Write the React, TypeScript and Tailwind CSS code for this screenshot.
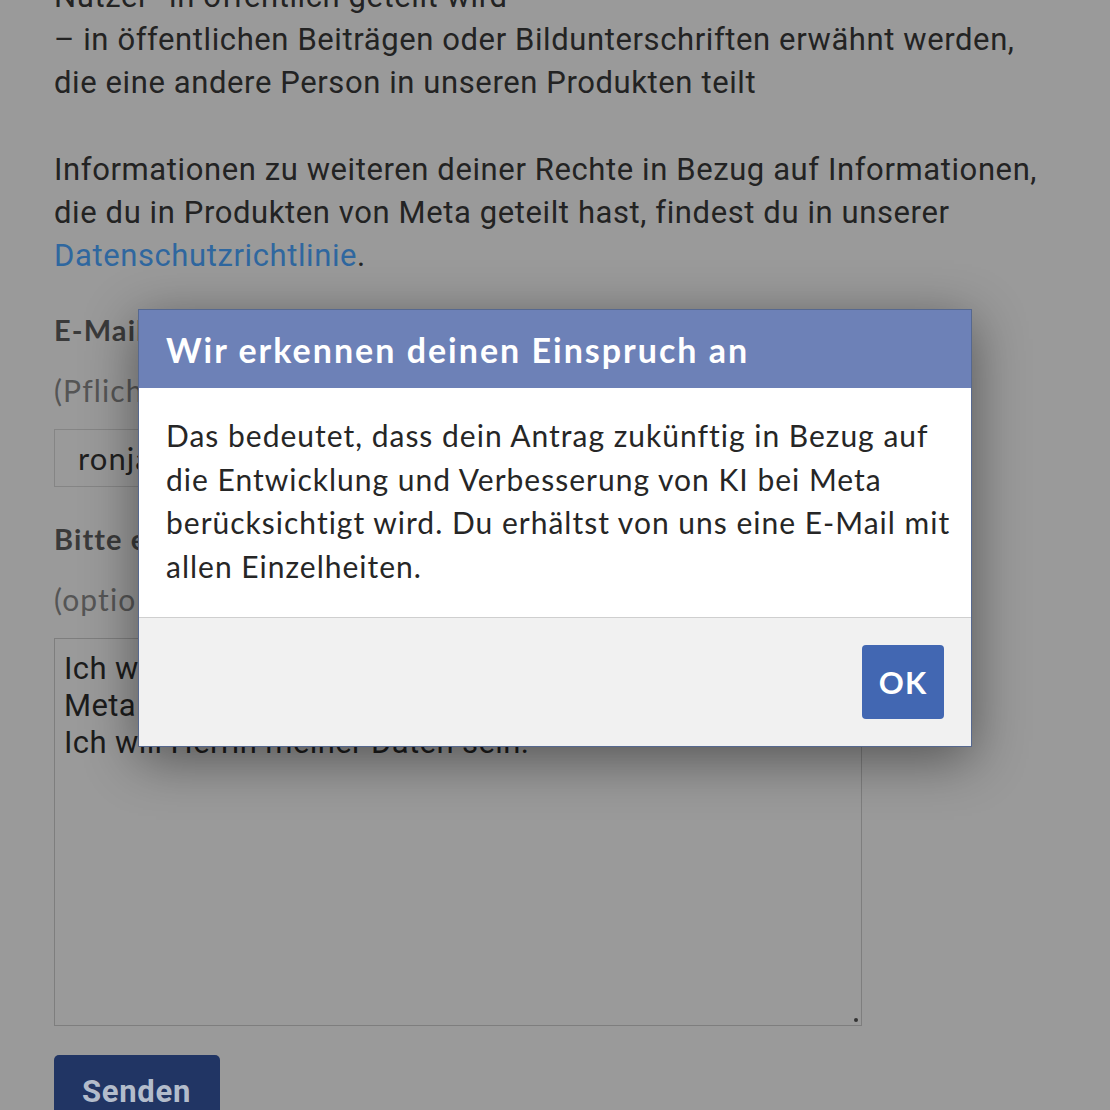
import React from 'react';

const bodyFont = "font-['Roboto','Liberation_Sans',sans-serif]";
const uiFont = "font-['Lato','Open_Sans',sans-serif]";

const ObjectionDialog: React.FC = () => {
  return (
    <div className={`absolute left-[138px] top-[309px] w-[834px] border border-[#56688f] bg-white shadow-[0_12px_50px_rgba(0,0,0,0.45)] ${uiFont}`}>
      <div className="h-[78px] bg-[#6d81b7] px-[27px] flex items-center">
        <h2 className="text-[34px] font-bold text-white tracking-[2px]">Wir erkennen deinen Einspruch an</h2>
      </div>
      <div className="px-[27px] pt-[26px] pb-[28px] text-[30px] leading-[43.7px] tracking-[1px] whitespace-nowrap text-[#262626]">
        Das bedeutet, dass dein Antrag zukünftig in Bezug auf
        <br />
        die Entwicklung und Verbesserung von KI bei Meta
        <br />
        berücksichtigt wird. Du erhältst von uns eine E-Mail mit
        <br />
        allen Einzelheiten.
      </div>
      <div className="border-t border-[#cfcfcf] bg-[#f1f1f1] px-[27px] py-[27px] flex justify-end">
        <button className="h-[74px] w-[82px] rounded-[4px] bg-[#4267b2] text-[31px] font-bold tracking-[1px] text-white">OK</button>
      </div>
    </div>
  );
};

const App: React.FC = () => {
  return (
    <div className="relative w-[1110px] h-[1110px] overflow-hidden bg-[#9a9a9a]">
      <div className={`pl-[54px] pr-[20px] mt-[-25px] text-[31px] leading-[43px] tracking-[0.6px] text-[#232323] ${bodyFont}`}>
        <p>Nutzer“ in öffentlich geteilt wird</p>
        <p>– in öffentlichen Beiträgen oder Bildunterschriften erwähnt werden,</p>
        <p>die eine andere Person in unseren Produkten teilt</p>

        <p className="mt-[44px] whitespace-nowrap">
          Informationen zu weiteren deiner Rechte in Bezug auf Informationen,
          <br />
          die du in Produkten von Meta geteilt hast, findest du in unserer
          <br />
          <span className="text-[#2f679f]">Datenschutzrichtlinie</span>.
        </p>

        <div className={`${uiFont} tracking-[1.1px]`}>
          <div className="mt-[31px] text-[29px] font-bold leading-[43px] text-[#3a3a3a]">E-Mail-Adresse</div>
          <div className="mt-[18px] text-[30px] leading-[43px] text-[#555555]">(Pflichtfeld)</div>
          <div className="mt-[17px] w-[808px] h-[58px] border border-[#858585] flex items-center px-[23px] text-[31px] text-[#1f1f1f]">
            ronja.beispiel@mail.de
          </div>
          <div className="mt-[30px] text-[29px] font-bold leading-[43px] text-[#3a3a3a]">Bitte erkläre, wie sich die Verarbeitung auf dich auswirkt</div>
          <div className="mt-[18px] text-[30px] leading-[43px] text-[#555555]">(optional)</div>
        </div>

        <div className="relative mt-[17px] w-[808px] h-[388px] border border-[#7e7e7e] px-[9px] pt-[11px] text-[31px] leading-[37px] tracking-[0.4px] text-[#1c1c1c]">
          <p>Ich widerspreche der Nutzung meiner Daten durch</p>
          <p>Meta für das Training von KI.</p>
          <p>Ich will Herrin meiner Daten sein.</p>
          <span className="absolute right-[3px] bottom-[3px] w-[4px] h-[4px] rounded-full bg-[#333]" />
        </div>

        <button className="mt-[29px] h-[64px] w-[166px] rounded-t-[5px] bg-[#213564] text-left pl-[28px] pt-[8px] text-[31px] font-bold tracking-[0.7px] text-[#b3bccb]">
          Senden
        </button>
      </div>

      <ObjectionDialog />
    </div>
  );
};

export default App;
